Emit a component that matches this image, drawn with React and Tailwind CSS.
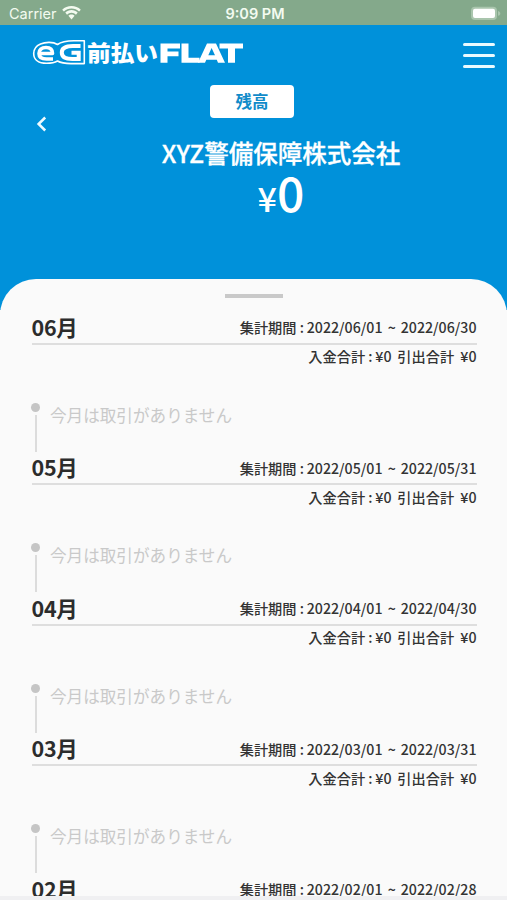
import React from "react";

const months = [
  { name: "06月", from: "2022/06/01", to: "2022/06/30" },
  { name: "05月", from: "2022/05/01", to: "2022/05/31" },
  { name: "04月", from: "2022/04/01", to: "2022/04/30" },
  { name: "03月", from: "2022/03/01", to: "2022/03/31" },
  { name: "02月", from: "2022/02/01", to: "2022/02/28" },
];

function StatusBar() {
  return (
    <div className="grid h-[25px] shrink-0 grid-cols-3 items-center bg-[#84a98b] pr-1.5 pl-[9px] font-['Inter','Liberation_Sans',sans-serif] text-[#f3fbf0]">
      <div className="flex items-center gap-1.5 pt-[3px] text-[14.5px] leading-none">
        <span className="w-[47px] whitespace-nowrap">Carrier</span>
        <svg width="19" height="14" viewBox="0 0 19 14" fill="currentColor" className="-mt-0.5">
          <path d="M9.5 0C5.9 0 2.7 1.3 .2 3.7L1.9 5.5C3.9 3.6 6.6 2.4 9.5 2.4s5.6 1.2 7.600 3.1l1.700-1.800C16.300 1.300 13.100 0 9.500 0Z" />
          <path d="M9.500 4.100c-2.400 0-4.600.9-6.200 2.500L5 8.700c1.200-1.100 2.800-1.900 4.500-1.900s3.300.8 4.500 1.900l1.700-2.100c-1.600-1.600-3.800-2.500-6.200-2.500Z" />
          <path d="M9.500 8.500c-1.200 0-2.300.5-3.100 1.300L9.500 13.500l3.100-3.700c-.8-.8-1.900-1.300-3.100-1.300Z" />
        </svg>
      </div>
      <div className="pt-[3px] text-center text-[14.500px] leading-none font-semibold whitespace-nowrap">9:09 PM</div>
      <svg width="31" height="15" viewBox="0 0 31 15" className="mt-0.5 justify-self-end">
        <rect x="1" y=".7" width="26" height="13.300" rx="4" fill="#a9c5ad" />
        <rect x="3" y="2.700" width="22" height="9.300" rx="2" fill="#fff" />
        <path d="M28 5c1.600.5 2.300 1.300 2.300 2.400S29.600 9.300 28 9.800Z" fill="#a9c5ad" />
      </svg>
    </div>
  );
}

function Logo() {
  return (
    <svg width="214" height="30" viewBox="0 0 214 30" fill="#fff" fontFamily="'Noto Sans CJK JP',sans-serif" fontWeight="900">
      <g fill="none" stroke="#fff" strokeLinejoin="round">
        <path d="M25.500 5.500C21 2.700 13.500 2.900 8.500 5C4 7 1.700 10.500 1.700 14.500C1.700 21 7 24.300 14.500 24.300C19 24.300 22.500 23.800 25.500 22C29 24 34 24.600 39 24.600H52.300V1.800H42C35 1.800 29.500 2.500 25.500 5.500Z" strokeWidth="1.600" />
        <path d="M8 14.500H20.500C20.500 10.500 18 8.500 14 8.500C9.500 8.500 7 11 7 14.500C7 18.500 10 20 14.500 20H21" strokeWidth="3.600" />
        <path d="M48.500 7H41C34 7 29.800 9 29.800 13.500C29.800 18 34 20 40.500 20H46.700V13.800H39.500" strokeWidth="4" strokeLinejoin="miter" />
      </g>
      <text x="55" y="22.200" fontSize="22" textLength="71" lengthAdjust="spacingAndGlyphs">前払い</text>
      <g>
        <path d="M128.500 4.500H148V9.500H135.500V12.500H146.500V17.300H135.500V23.800H128.500Z" />
        <path d="M149.500 4.500H156.500V18.800H167.500V23.800H149.500Z" />
        <path fillRule="evenodd" d="M175 4.500H184L193 23.800H186L184.800 20.800H174.300L173 23.800H166ZM179.600 8.900L176.300 16.300H183Z" />
        <path d="M187.500 4.500H211V9.500H203V23.800H196V9.500H187.500Z" />
      </g>
    </svg>
  );
}

function Header() {
  return (
    <header className="h-[285px] shrink-0 bg-[#0091da] text-white">
      <div className="flex h-[60px] items-start justify-between pt-3.5 pr-3 pl-8">
        <Logo />
        <div className="mt-1 flex w-8 flex-col gap-2">
          <span className="h-[3px] rounded-full bg-[#eafaff]" />
          <span className="h-[3px] rounded-full bg-[#eafaff]" />
          <span className="h-[3px] rounded-full bg-[#eafaff]" />
        </div>
      </div>
      <div className="grid grid-cols-[210px_84px_1fr]">
        <svg width="12" height="16" viewBox="0 0 12 16" fill="none" stroke="#effbff" strokeWidth="2.500" className="mt-[31px] ml-9">
          <path d="M9.200 1.500L2.600 8L9.200 14.500" />
        </svg>
        <div className="flex h-[33px] items-center justify-center rounded-[4px] bg-white text-[16.500px] font-bold text-[#118bc9]">残高</div>
      </div>
      <div className="pl-[55px] text-center">
        <h1 className="mt-[3px] text-[24.500px] leading-9 font-medium whitespace-nowrap [-webkit-text-stroke:0.3px_white]">XYZ警備保障株式会社</h1>
        <p className="flex h-12 items-baseline justify-center leading-[40px] font-medium">
          <span className="text-[34px]">¥</span>
          <span className="text-[48px]">0</span>
        </p>
      </div>
    </header>
  );
}

function Month({ name, from, to }) {
  return (
    <section className="h-[140.500px] shrink-0 text-[#333]">
      <div className="flex h-[34.500px] items-center justify-between border-b-2 border-[#dedede]">
        <h2 className="text-[21.500px] leading-8 font-bold tracking-[-0.300px] text-[#2c2c2c]">{name}</h2>
        <p className="flex pt-px text-[14.200px] leading-8 font-medium whitespace-nowrap">
          <span className="w-[67px]">集計期間 :</span>
          <span className="w-[81px]">{from}</span>
          <span className="w-[13px]">~</span>
          <span>{to}</span>
        </p>
      </div>
      <p className="flex h-6 items-center justify-end text-[14.200px] font-medium whitespace-nowrap">
        <span className="w-[67px]">入金合計 :</span>
        <span className="w-[22px]">¥0</span>
        <span className="w-[63px]">引出合計</span>
        <span>¥0</span>
      </p>
      <div className="mt-[34px] flex">
        <div className="flex w-2 flex-col items-center gap-[3px]">
          <span className="size-[9px] shrink-0 rounded-full bg-[#c5c5c5]" />
          <span className="h-[37px] w-0.5 bg-[#dcdcdc]" />
        </div>
        <p className="ml-[10.500px] text-[16.600px] leading-6 text-[#c9c9c9]">今月は取引がありません</p>
      </div>
    </section>
  );
}

export default function App() {
  return (
    <div className="flex h-[900px] w-[507px] flex-col overflow-hidden bg-[#fafafa] font-['Noto_Sans_CJK_JP',sans-serif]">
      <StatusBar />
      <Header />
      <main className="-mt-[31px] flex h-[617px] shrink-0 flex-col overflow-hidden rounded-t-[36px] bg-[#fafafa] pr-[30.500px] pl-[31.500px]">
        <div className="flex h-[31.400px] shrink-0 justify-center pt-[15px]">
          <span className="h-[3.500px] w-[58px] bg-[#c9c9c9]" />
        </div>
        {months.map((m) => (
          <Month key={m.name} {...m} />
        ))}
      </main>
      <div className="h-1 bg-[#f0f0f2]" />
    </div>
  );
}
